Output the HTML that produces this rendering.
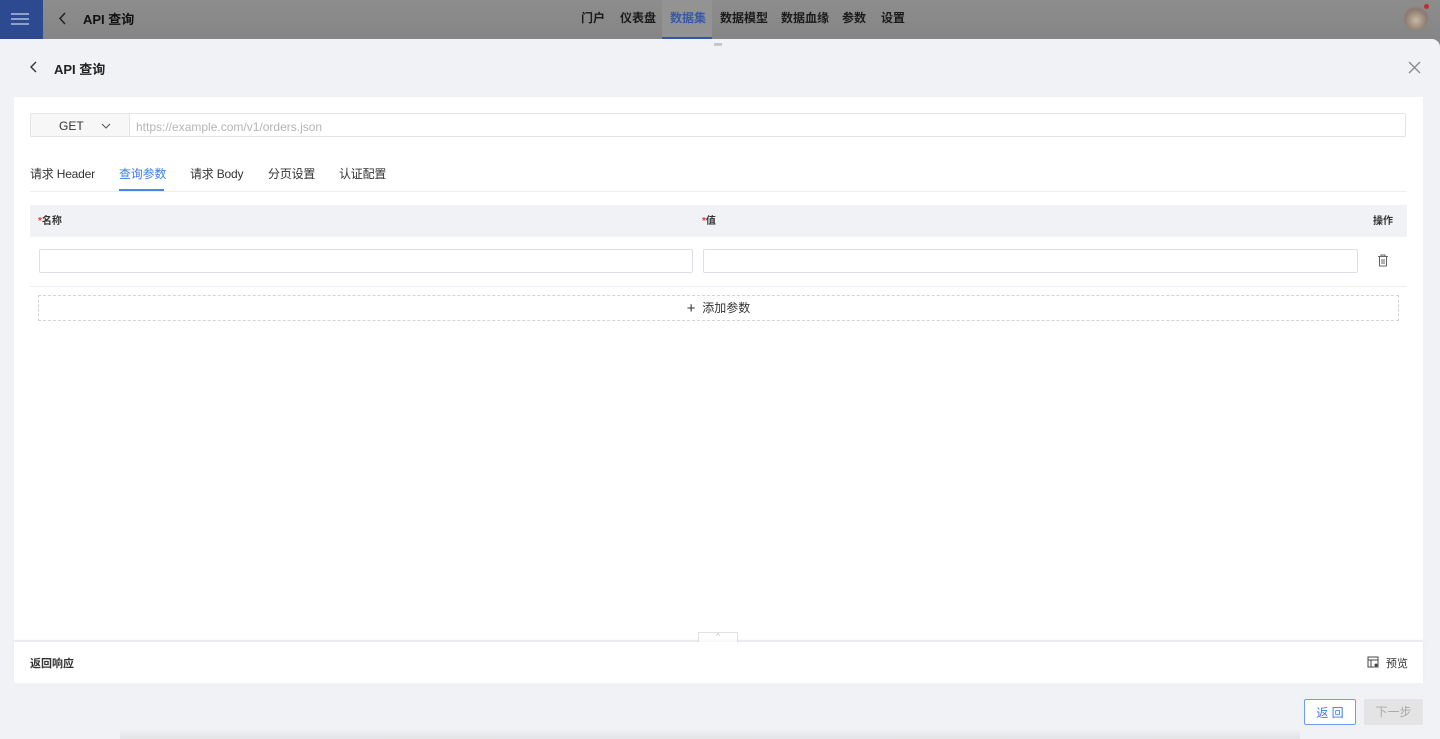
<!DOCTYPE html>
<html><head><meta charset="utf-8"><style>
*{box-sizing:border-box;margin:0;padding:0}
body{width:1440px;height:739px;overflow:hidden;background:#888;font-family:"Liberation Sans","Noto Sans CJK SC",sans-serif;position:relative;color:#333}
.top{position:absolute;left:0;top:0;width:1440px;height:39px;background:linear-gradient(#8d8d8d,#858585)}
.ham{position:absolute;left:0;top:0;width:43px;height:39px;background:#2d4a90}
.ham i{position:absolute;left:11px;width:18px;height:2px;background:#8fa0c8}
.nav{position:absolute;top:0;height:39px;font-size:12px;font-weight:bold;color:#1a1a1a;line-height:36px}
.panel{position:absolute;left:0;top:39px;width:1440px;height:700px;background:#f0f2f5;border-top-right-radius:8px}
.card{position:absolute;left:14px;top:58px;width:1409px;height:543px;background:#fff}
.inp{position:absolute;border:1px solid #dcdfe6;background:#fff;border-radius:2px}
.tab{position:absolute;font-size:12px;color:#333;letter-spacing:-0.2px}
</style></head><body>
<div class="top">
<div class="ham"><i style="top:13px"></i><i style="top:18px"></i><i style="top:23px"></i></div>
<svg style="position:absolute;left:58px;top:12px" width="10" height="14"><path d="M7 1L2 6.5l5 5.5" stroke="#222" stroke-width="1.5" fill="none"/></svg>
<div style="position:absolute;left:83px;top:9px;font-size:13px;font-weight:bold;color:#111">API 查询</div>
<div class="nav" style="left:581px">门户</div>
<div class="nav" style="left:620px">仪表盘</div>
<div style="position:absolute;left:662px;top:0;width:50px;height:39px;background:#939393;border-bottom:2px solid #3457a6"></div>
<div class="nav" style="left:670px;color:#3658a8">数据集</div>
<div class="nav" style="left:720px">数据模型</div>
<div class="nav" style="left:781px">数据血缘</div>
<div class="nav" style="left:842px">参数</div>
<div class="nav" style="left:881px">设置</div>
<div style="position:absolute;left:1404px;top:6px;width:24px;height:24px;border-radius:50%;background:radial-gradient(circle at 50% 60%,#c9b8a0,#8a7a70 60%,#999)"></div>
<div style="position:absolute;left:1424px;top:4px;width:5px;height:5px;border-radius:50%;background:#c0302a"></div>
</div>
<div class="panel">
<div style="position:absolute;left:714px;top:4px;width:8px;height:3px;background:#c8c8c8"></div>
<svg style="position:absolute;left:29px;top:22px" width="10" height="14"><path d="M7 1L2 6l5 5" stroke="#333" stroke-width="1.4" fill="none"/></svg>
<div style="position:absolute;left:54px;top:20px;font-size:13px;font-weight:bold;color:#222">API 查询</div>
<svg style="position:absolute;left:1408px;top:22px" width="13" height="13"><path d="M1 1l11 11M12 1L1 12" stroke="#888" stroke-width="1.3"/></svg>
<div class="card">
<div class="inp" style="left:16px;top:16px;width:1376px;height:24px;border-color:#e2e4e8"></div>
<div style="position:absolute;left:17px;top:17px;width:99px;height:22px;background:#f7f7f8;border-right:1px solid #e2e4e8;font-size:12px;color:#333;line-height:24px;padding-left:28px">GET<svg style="position:absolute;left:70px;top:9px" width="10" height="6"><path d="M1 1l4 4 4-4" stroke="#555" fill="none"/></svg></div>
<div style="position:absolute;left:122px;top:23px;font-size:12px;color:#b5b5b5">https://example.com/v1/orders.json</div>
<div class="tab" style="left:16px;top:68px">请求 Header</div>
<div class="tab" style="left:105px;top:68px;color:#3d7cf0">查询参数</div>
<div style="position:absolute;left:105px;top:92px;width:45px;height:2px;background:#4a86f0"></div>
<div class="tab" style="left:176px;top:68px">请求 Body</div>
<div class="tab" style="left:254px;top:68px">分页设置</div>
<div class="tab" style="left:325px;top:68px">认证配置</div>
<div style="position:absolute;left:16px;top:94px;width:1377px;height:1px;background:#eee"></div>
<div style="position:absolute;left:16px;top:108px;width:1377px;height:32px;background:#f0f2f5;font-size:10px;font-weight:bold;color:#333;line-height:34px">
<span style="position:absolute;left:8px"><span style="color:#e33">*</span>名称</span>
<span style="position:absolute;left:672px"><span style="color:#e33">*</span>值</span>
<span style="position:absolute;left:1343px">操作</span></div>
<div class="inp" style="left:25px;top:152px;width:654px;height:24px"></div>
<div class="inp" style="left:689px;top:152px;width:655px;height:24px"></div>
<svg style="position:absolute;left:1363px;top:157px" width="12" height="13"><path d="M1 2.5h10M4 2.5V1h4v1.5M2.5 2.5v9.5h7V2.5M5 5v5M7 5v5" stroke="#666" fill="none"/></svg>
<div style="position:absolute;left:16px;top:189px;width:1377px;height:1px;background:#eee"></div>
<div style="position:absolute;left:24px;top:198px;width:1361px;height:26px;border:1px dashed #d4d4d4;font-size:12px;color:#333;text-align:center;line-height:24px"><span style="font-size:15px;vertical-align:-1px">+</span>&nbsp; 添加参数</div>
</div>
<div style="position:absolute;left:698px;top:593px;width:40px;height:10px;border:1px solid #e2e2e2;border-bottom:none;background:#fff;font-size:8px;color:#bbb;text-align:center;line-height:8px">^</div>
<div style="position:absolute;left:14px;top:603px;width:1409px;height:41px;background:#fff;box-shadow:0 -2px 3px rgba(0,0,0,.04)">
<div style="position:absolute;left:16px;top:13px;font-size:11px;font-weight:bold;color:#333">返回响应</div>
<svg style="position:absolute;left:1353px;top:14px" width="12" height="12"><rect x="1" y="1" width="10" height="10" fill="none" stroke="#444"/><path d="M1 4h10M4 4v7" stroke="#444"/><circle cx="9" cy="9" r="1.5" fill="#444"/></svg>
<div style="position:absolute;left:1372px;top:13px;font-size:11px;color:#333">预览</div>
</div>
<div style="position:absolute;left:1304px;top:660px;width:52px;height:26px;border:1px solid #6d9ef2;background:#fff;color:#3d7cf0;font-size:12px;text-align:center;line-height:26px;border-radius:2px">返 回</div>
<div style="position:absolute;left:1364px;top:660px;width:59px;height:26px;background:#e4e4e4;color:#aaa;font-size:12px;text-align:center;line-height:26px;border-radius:2px">下一步</div>
<div style="position:absolute;left:120px;top:690px;width:1180px;height:10px;background:linear-gradient(#f0f2f5,#e2e3e6)"></div>
</div>
</body></html>
